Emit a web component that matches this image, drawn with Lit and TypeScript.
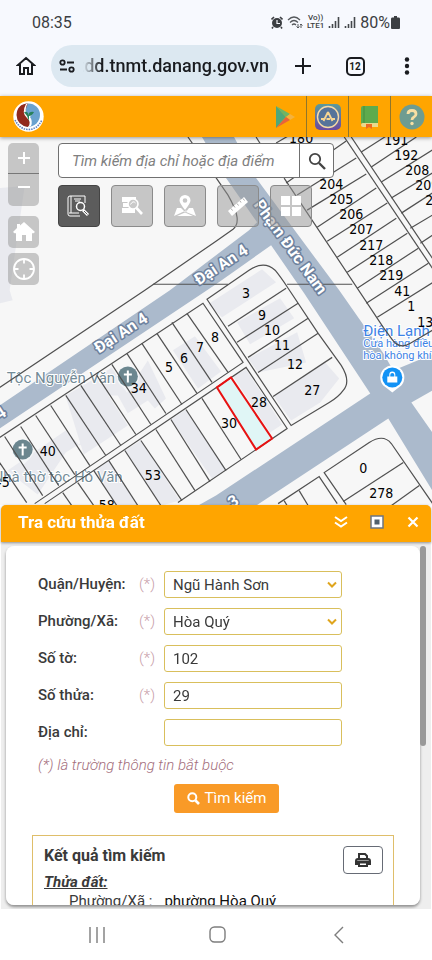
import { LitElement, html, css, svg } from "lit";
import { customElement } from "lit/decorators.js";

type Seg = [number, number, number, number];

// Parcel dividers, as start and end points on the map sheet.
const dividers: Seg[] = [
  [0, 462, 27, 502], [5, 436, 43, 495], [21, 426, 59, 485], [36, 415, 75, 474],
  [51, 405, 90, 465], [66, 395, 106, 455], [81, 385, 121, 445], [97, 375, 136, 434],
  [112, 364, 151, 424], [127, 353, 166, 413], [142, 343, 182, 404], [157, 333, 197, 393],
  [172, 322, 212, 382], [187, 313, 228, 372],
  [63, 492, 72, 505], [78, 482, 94, 505], [94, 470, 117, 505], [109, 460, 138, 505],
  [125, 450, 161, 505], [141, 440, 182, 500], [156, 429, 195, 490], [171, 419, 210, 481],
  [186, 409, 226, 470], [202, 398, 241, 459],
  [228, 326, 286, 288], [237, 342, 298, 303], [248, 357, 308, 318], [258, 372, 318, 333],
  [273, 396, 332, 357],
  [343, 501, 403, 462], [391, 505, 419, 485], [284, 500, 287, 505], [299, 490, 308, 505],
  [286, 183, 346, 141], [297, 195, 356, 158], [307, 210, 366, 174], [317, 227, 376, 188],
  [327, 241, 387, 203], [337, 257, 396, 218], [347, 272, 407, 233], [357, 288, 418, 248],
  [366, 303, 428, 263], [377, 317, 436, 280],
  [361, 152, 386, 136], [371, 167, 416, 137], [381, 182, 432, 150], [391, 198, 432, 173],
  [401, 213, 432, 193], [410, 228, 432, 215], [420, 243, 432, 235],
  [276, 143, 288, 136], [256, 137, 261, 145], [153, 284, 228, 284], [287, 284, 352, 284],
];

const outlines = [
  "M0 387 145 290 216 241 233 229Q238 225 237 217T228 195L188 137",
  "M0 437 203 303 243 362 35 503",
  "M45 503 246 367 287 428 178 502",
  "M207 299 249 270Q264 260 275 270 280 276 288 288L318 333 341 365Q351 381 343 390 338 397 329 402L291 425Z",
  "M346 504 324 472 369 442Q383 433 391 443L433 504",
  "M278 503 319 476 337 503",
  "M284 178 383 327 391 338Q399 350 410 343L432 330",
  "M344 137 432 268",
  "M351 137 432 258",
];

const buildings = [
  "M0 188 25 186 10 290 13 300 0 303Z",
  "M8 470 66 430 80 445 128 413 118 395 66 395 92 380 112 367 127 392 148 360 166 398 155 408 148 400 66 452 38 494 20 480Z",
  "M66 396 97 377 128 425 84 454Z",
  "M173 350 195 336 221 371 198 388Z",
  "M94 470 109 460 138 505H117Z",
  "M125 450 141 440 180 500 161 505Z",
  "M171 419 186 409 226 470 212 478Z",
  "M208 304 262 269 276 282 222 317Z",
  "M237 322 280 298 294 318 250 344Z",
  "M248 358 297 332 306 362 258 372Z",
  "M274 396 325 362 339 378 320 402 291 420Z",
  "M233 376 246 369 282 424 270 432Z",
];

const numbers: [string, number, number][] = [
  ["180", 301, 138], ["191", 396, 140], ["192", 406, 155], ["208", 417, 170], ["209", 427, 185],
  ["210", 437, 200], ["204", 331, 184], ["205", 341, 199], ["206", 351, 214], ["207", 361, 229],
  ["217", 371, 245], ["218", 381, 260], ["219", 391, 275], ["41", 402, 291], ["1", 411, 306],
  ["13", 425, 322], ["3", 246, 293], ["9", 262, 315], ["10", 272, 330], ["11", 282, 345],
  ["12", 295, 364], ["27", 312, 390], ["28", 259, 402], ["30", 229, 423], ["8", 215, 337],
  ["7", 200, 347], ["6", 184, 358], ["5", 169, 367], ["34", 139, 388], ["40", 48, 450],
  ["53", 153, 474], ["45", 2, 481], ["58", 107, 504], ["0", 363, 467], ["278", 381, 492],
];

const roads: [string, number, number, number][] = [
  ["Đại An 4", 124, 337, -33], ["Đại An 4", 224, 269, -33], ["Phạm Đức Nam", 286, 250, 54],
  ["4", 4, 417, -33], ["3", 236, 505, -33],
];

const church = (x: number, y: number) => svg`
  <g transform="translate(${x} ${y})">
    <path d="M0 16Q-4 12-8 8A11 11 0 1 1 8 8Q4 12 0 16Z" fill="#f4f6f8"/>
    <circle r="10" fill="#6b868f"/>
    <path d="M0-6V6M-4-2H4" stroke="#fff" stroke-width="2"/>
  </g>`;

@customElement("parcel-map")
export class ParcelMap extends LitElement {
  static styles = css`
    :host { display: block; position: relative; overflow: hidden; background: #f7f7f7;
      font-family: Roboto, "Noto Sans", sans-serif; }
    .sheet { display: block; width: 100%; height: 100%; }
    .lines { fill: none; stroke: #505050; stroke-width: 1.2; }
    .num { font: 14px "DejaVu Sans Condensed", "Noto Sans", sans-serif; fill: #000; text-anchor: middle; }
    .road { font-size: 16px; font-weight: 700; fill: #fff; stroke: #6d819d; stroke-width: 3px;
      paint-order: stroke; stroke-linejoin: round; text-anchor: middle; }
    .poi { font-size: 15px; fill: #748c98; stroke: #fff; stroke-width: 2px; paint-order: stroke; }
    .shop { fill: #3d83e6; }
    .small { font-size: 11px; }
    .overlay { position: absolute; inset: 6px 8px auto 8px; display: flex; gap: 19px; align-items: flex-start; }
    .side { display: flex; flex-direction: column; width: 31px; }
    button { font: inherit; margin: 0; padding: 0; border: 0; cursor: pointer;
      display: grid; place-items: center; }
    .side button { height: 32px; background: rgba(150, 150, 150, 0.5); border-radius: 5px; }
    .side .in { height: 31px; border-radius: 5px 5px 0 0; border-bottom: 1px solid #777; }
    .side .out { border-radius: 0 0 5px 5px; margin-bottom: 10px; }
    .side .home { margin-bottom: 5px; }
    .main { flex: 1; display: flex; flex-direction: column; gap: 7px; min-width: 0; }
    .search { display: flex; max-width: 276px; height: 35px; box-sizing: border-box; background: #fff;
      border: 1px solid #707070; border-radius: 4px; }
    .search input { flex: 1; min-width: 0; border: 0; background: none; padding: 0 13px; outline: 0;
      font: italic 15px Roboto, "Noto Sans", sans-serif; }
    .search input::placeholder { color: #808080; opacity: 1; }
    .search button { width: 34px; background: none; border-left: 1px solid #707070; }
    .tools { display: flex; gap: 11px; }
    .tools button { width: 42px; height: 42px; border: 1px solid #8b8b8b; border-radius: 4px;
      background: rgba(150, 150, 150, 0.5); }
    .tools .on { background: #5c5c5c; border-color: #444; }
  `;

  render() {
    return html`
      <svg class="sheet" viewBox="0 137 432 367" preserveAspectRatio="xMidYMin slice" role="img" aria-label="Bản đồ thửa đất">
        <g fill="#e9eaef">${buildings.map((d) => svg`<path d=${d}/>`)}</g>
        <g fill="#abbacc">
          <path d="M0 405 170 290 249 230 257 222 226 178 202 137H234L256 178 313 255 339 290 383 353 393 370 432 354V390L411 402 432 432V490L388 418 256 505H198L216 495 370 393 304 293 271 245 216 284 207 290 0 428Z"/>
        </g>
        <path d="M217 387 231 377 272 438 256 449Z" fill="#e0f6f6"/>
        <text class="poi" x="7" y="383">Tộc Nguyễn Văn</text>
        <text class="poi" x="-7" y="481">Nhà thờ tộc Hồ Văn</text>
        <text class="poi shop" x="363" y="336">Điện Lạnh</text>
        <text class="poi shop small" x="363" y="347">Cửa hàng điều</text>
        <text class="poi shop small" x="363" y="359">hòa không khí</text>
        ${church(128, 376)}${church(23, 449)}
        <path d="M392 392Q387 388 383 385A12 12 0 1 1 401 385Q397 388 392 392Z" fill="#fff"/>
        <circle cx="392" cy="377" r="10" fill="#1292f5"/>
        <path d="M387 376H397V382H387ZM389 376V374A3 3 0 0 1 395 374V376Z" fill="#fff"/>
        <path d="M390 376V374.500A2 2 0 0 1 394 374.500V376Z" fill="#1292f5"/>
        <g class="lines">
          ${outlines.map((d) => svg`<path d=${d}/>`)}
          ${dividers.map(([a, b, c, d]) => svg`<line x1=${a} y1=${b} x2=${c} y2=${d}/>`)}
        </g>
        ${roads.map(([t, x, y, r]) => svg`<text class="road" transform="translate(${x} ${y}) rotate(${r})">${t}</text>`)}
        <path d="M217 387 231 377 272 438 256 449Z" fill="none" stroke="#e81212" stroke-width="2"/>
        ${numbers.map(([t, x, y]) => svg`<text class="num" x=${x} y=${y + 5}>${t}</text>`)}
      </svg>
      <div class="overlay">
        <div class="side">
          <button class="in" aria-label="Phóng to"><svg width="14" height="14"><path d="M7 1V13M1 7H13" stroke="#fff" stroke-width="2"/></svg></button>
          <button class="out" aria-label="Thu nhỏ"><svg width="14" height="14"><path d="M1 4H13" stroke="#fff" stroke-width="2"/></svg></button>
          <button class="home" aria-label="Toàn cảnh"><svg width="22" height="22"><path d="M11 1 22 11 20 12.500 19 12V20H13V14H9V20H3V12L2 12.500 0 11 4 7V3H7V4.500Z" fill="#fff"/></svg></button>
          <button aria-label="Vị trí của tôi"><svg width="24" height="24" fill="none" stroke="#fff" stroke-width="1.800"><circle cx="12" cy="12" r="10"/><path d="M12 2V6.500M12 17.500V22M2 12H6.500M17.500 12H22"/></svg></button>
        </div>
        <div class="main">
          <form class="search" @submit=${(e: Event) => e.preventDefault()}>
            <input type="text" aria-label="Tìm kiếm địa chỉ" placeholder="Tìm kiếm địa chỉ hoặc địa điểm" />
            <button aria-label="Tìm"><svg width="18" height="18" fill="none" stroke="#444" stroke-width="1.800"><circle cx="7" cy="7" r="5.200"/><path d="M11 11 17 17" stroke-width="2.400"/></svg></button>
          </form>
          <div class="tools">
            <button class="on" aria-label="Tra cứu thửa đất">
              <svg width="24" height="24" fill="none" stroke="#fff" stroke-width="1"><path d="M18 9V2H3Q1 2 1 4V20Q1 22 3 22H13M4 2V19M2 19H12M7 5H14M8 7H13"/><circle cx="13.500" cy="12.500" r="4" stroke-width="1.500"/><path d="M16 16 21 21" stroke-width="3"/><path d="M17 17 20.500 20.500" stroke="#5c5c5c"/></svg>
            </button>
            <button aria-label="Tra cứu quy hoạch">
              <svg width="24" height="24" fill="#fff"><path d="M2 3H16V8H2ZM3 9H15V13H3ZM2 14H15V19H2Z"/><circle cx="13" cy="10" r="5" fill="#cacaca" stroke="#fff" stroke-width="1.600"/><path d="M10.500 10.500Q13 6 15.500 9" fill="none" stroke="#fff"/><path d="M16.500 14 22 20" stroke="#fff" stroke-width="2.600"/></svg>
            </button>
            <button aria-label="Địa điểm">
              <svg width="24" height="24" fill="#fff"><path fill-rule="evenodd" d="M12 1A5.500 5.500 0 0 1 17.500 6.500Q17.500 9 12 16 6.500 9 6.500 6.500A5.500 5.500 0 0 1 12 1ZM12 4.200A2.300 2.300 0 1 0 12 8.800 2.300 2.300 0 1 0 12 4.200Z"/><path d="M4 14H8L12 18 14 16 1 22ZM16 14H20L23 22 13 18ZM12 18.500 20 22H4Z"/></svg>
            </button>
            <button aria-label="Đo đạc">
              <svg width="24" height="24"><path d="M2 17 18 3 22 8 6 22Z" fill="#fff"/><path d="M5 14.500 6.500 16.500M8 12 9 13.500M11 9.500 12.500 11.500M14 7 15 8.500M17 4.500 18.500 6.500" stroke="#aaa" fill="none"/></svg>
            </button>
            <button aria-label="Lớp bản đồ">
              <svg width="24" height="24" fill="#fff"><path d="M2 2H11V11H2ZM13 2H22V11H13ZM2 13H11V22H2ZM13 13H22V22H13Z"/></svg>
            </button>
          </div>
        </div>
      </div>
    `;
  }
}

@customElement("lookup-panel")
export class LookupPanel extends LitElement {
  static styles = css`
    :host { display: flex; flex-direction: column; margin: 0 1px; min-height: 0; background: #eee;
      border-radius: 5px 5px 0 0; font: 15px/20px Roboto, "Noto Sans", sans-serif; color: #3a3a3a; }
    button { font: inherit; border: 0; margin: 0; padding: 0; background: none; cursor: pointer;
      display: flex; align-items: center; justify-content: center; }
    .bar { flex: none; height: 37px; display: flex; align-items: center; gap: 20px; padding: 0 10px 2px 17px;
      box-sizing: border-box; background: #ffa500; color: #fff; border-radius: 5px 5px 0 0;
      box-shadow: 0 1px 3px rgba(0, 0, 0, 0.4); z-index: 1; }
    h2 { flex: 1; margin: 0; font-size: 17px; font-weight: 700; }
    .bar button { width: 16px; height: 16px; }
    .body { flex: 1; min-height: 0; display: flex; padding: 4px 5px; }
    .scroll { flex: 1; min-width: 0; overflow: hidden auto; scrollbar-width: none; background: #fff;
      border-radius: 8px; box-shadow: 0 2px 3px rgba(0, 0, 0, 0.4); padding: 25px 26px 0 26px; }
    .thumb { flex: none; width: 6px; height: 200px; background: #999; border-radius: 3px; }
    form { display: flex; flex-direction: column; gap: 10px; padding-left: 6px; }
    .row { display: grid; grid-template-columns: 98px 24px minmax(0, 178px); align-items: center; height: 27px; column-gap: 2px; }
    label { font-weight: 500; }
    .req { color: #c9a0aa; font-weight: 300; padding-left: 1px; }
    .field { position: relative; }
    .field input, .field select { display: block; width: 100%; height: 27px; box-sizing: border-box; margin: 0;
      padding: 1px 8px 0; font: 15px Roboto, "Noto Sans", sans-serif; color: #3a3a3a; background: #fff;
      border: 1px solid #d9bf5c; border-radius: 3px; appearance: none; outline: 0; }
    .field svg { position: absolute; right: 5px; top: 9px; pointer-events: none; }
    .note { margin: 0; line-height: 18px; font-style: italic; font-weight: 300; color: #a36e7c; }
    .go { align-self: flex-start; gap: 5px; height: 29px; width: 105px; margin-left: 136px; margin-bottom: 22px;
      background: #f99a27; color: #fff; border-radius: 3px; }
    .result { display: grid; grid-template-columns: 1fr auto; border: 1px solid #dfbe6a; padding: 10px 10px 40px 11px; }
    h3 { margin: 0; font-size: 16px; font-weight: 700; line-height: 20px; }
    h4 { margin: 6px 0 0; font-size: 15px; font-weight: 700; font-style: italic; text-decoration: underline; }
    .print { grid-row: 1 / 3; grid-column: 2; width: 40px; height: 28px; box-sizing: border-box;
      border: 1px solid #666b75; border-radius: 4px; }
    dl { grid-column: 1 / 3; display: flex; gap: 12px; margin: 0; padding-left: 25px; height: 18px; line-height: 18px; }
    dd { margin: 0; color: #111; }
  `;

  private arrow() {
    return html`<svg width="10" height="9" fill="none" stroke="#dfa51d" stroke-width="2"><path d="M1 2.500 5 6.500 9 2.500" /></svg>`;
  }

  private row(id: string, label: string, value: string, kind: "select" | "input", required = true) {
    return html`
      <div class="row">
        <label for=${id}>${label}</label>
        <span class="req">${required ? "(*)" : ""}</span>
        <div class="field">
          ${kind === "select"
            ? html`<select id=${id}><option>${value}</option></select>${this.arrow()}`
            : html`<input id=${id} type="text" .value=${value} />`}
        </div>
      </div>`;
  }

  render() {
    return html`
      <header class="bar">
        <h2>Tra cứu thửa đất</h2>
        <button aria-label="Thu gọn"><svg width="14" height="14" fill="none" stroke="#fff" stroke-width="2"><path d="M1 2 7 6 13 2M1 7.500 7 11.500 13 7.500" /></svg></button>
        <button aria-label="Phóng to"><svg width="14" height="14"><rect x="1" y="1" width="12" height="12" fill="#fff" stroke="#6b7683" stroke-width="1.500" /><rect x="4.500" y="4.500" width="5" height="5" fill="#50606c" /></svg></button>
        <button aria-label="Đóng"><svg width="12" height="12" stroke="#fff" stroke-width="2.200"><path d="M1.500 1.500 10.500 10.500M10.500 1.500 1.500 10.500" /></svg></button>
      </header>
      <div class="body">
        <div class="scroll">
          <form @submit=${(e: Event) => e.preventDefault()}>
            ${this.row("district", "Quận/Huyện:", "Ngũ Hành Sơn", "select")}
            ${this.row("ward", "Phường/Xã:", "Hòa Quý", "select")}
            ${this.row("sheet", "Số tờ:", "102", "input")}
            ${this.row("parcel", "Số thửa:", "29", "input")}
            ${this.row("address", "Địa chỉ:", "", "input", false)}
            <p class="note">(*) là trường thông tin bắt buộc</p>
            <button class="go"><svg width="13" height="13" fill="none" stroke="#fff"><circle cx="5.300" cy="5.300" r="4" stroke-width="2" /><path d="M8.500 8.500 12 12" stroke-width="2.600" /></svg>Tìm kiếm</button>
          </form>
          <section class="result">
            <h3>Kết quả tìm kiếm</h3>
            <button class="print" aria-label="In"><svg width="16" height="16" fill="none" stroke="#333" stroke-width="2"><path d="M4 7V2H10L12 4V7" /><path d="M1 12V9Q1 7 3 7H13Q15 7 15 9V12H12V14H4V12Z" /><path d="M2 10H14" stroke-width="3" /></svg></button>
            <h4>Thửa đất:</h4>
            <dl><dt>Phường/Xã :</dt><dd>phường Hòa Quý</dd></dl>
          </section>
        </div>
        <div class="thumb"></div>
      </div>
    `;
  }
}

@customElement("app-root")
export class AppRoot extends LitElement {
  static styles = css`
    :host { display: flex; flex-direction: column; height: 100vh; background: #fff; color: #3b3e42;
      font-family: Roboto, "Noto Sans", sans-serif; }
    button { font: inherit; color: inherit; border: 0; margin: 0; padding: 0; background: none; cursor: pointer;
      display: grid; place-items: center; }
    .status { display: flex; align-items: center; height: 44px; flex: none; background: #f7f9fe; padding: 0 32px; font-size: 16px; }
    .time { flex: 1; }
    .signals { display: flex; align-items: center; gap: 4px; }
    .volte { font-size: 8px; line-height: 8px; font-weight: 500; text-align: center; }
    .volte span { display: block; }
    .batt { display: flex; align-items: center; gap: 1px; }
    .browser { display: flex; align-items: center; height: 52px; flex: none; box-sizing: border-box; padding: 0 13px 8px 14px;
      background: #f7f9fe; color: #1a1c20; }
    .acts button, .start { width: 24px; height: 24px; }
    .url { flex: 1; min-width: 0; height: 42px; display: flex; align-items: center; gap: 8px; margin: 0 14px 0 13px; padding: 0 8px;
      border-radius: 21px; background: #dce8f1; }
    .host { flex: 1; min-width: 0; display: flex; justify-content: flex-end; overflow: hidden; white-space: nowrap; font-size: 18px; line-height: 28px; font-weight: 500;
      mask-image: linear-gradient(90deg, transparent, #000 18px); }
    .acts { display: flex; gap: 28px; align-items: center; }
    .tabs { font-size: 10px; font-weight: 700; }
    .tabs span { display: grid; place-items: center; width: 15px; height: 15px; border: 2px solid #1a1c20; border-radius: 5px; }
    .site { display: flex; align-items: stretch; height: 41px; flex: none; background: #ffa500; box-shadow: 0 1px 4px rgba(0, 0, 0, 0.4); z-index: 1; }
    .logo { flex: 1; display: flex; align-items: center; padding-left: 13px; }
    .site button { width: 42px; box-sizing: border-box; border-left: 1px solid #8f762c; }
    .site .first { border: 0; }
    parcel-map { flex: 10 1 0; min-height: 0; }
    lookup-panel { flex: 11 1 0; }
    .nav { display: flex; justify-content: space-between; align-items: center; height: 51px; flex: none; padding: 0 80px 0 84px; background: #fff; }
    .nav button { width: 26px; height: 26px; }
  `;

  private bars() {
    return html`<svg width="12" height="12" stroke="#44474b" stroke-width="1.600"><path d="M1.500 12V10M4.500 12V8M7.500 12V5M10.500 12V1" /></svg>`;
  }

  render() {
    return html`
      <div class="status">
        <span class="time">08:35</span>
        <div class="signals">
          <svg width="12" height="13"><circle cx="6" cy="7" r="5" fill="#3b3e42" /><path d="M0.500 3.500 3 1M11.500 3.500 9 1M2 11 1 12.500M10 11 11 12.500" stroke="#3b3e42" stroke-width="1.600" /><path d="M6 4V7.500H9" stroke="#f7f9fe" fill="none" stroke-width="1.200" /></svg>
          <svg width="16" height="14" fill="none" stroke="#55585c" stroke-width="1.200"><path d="M1 5Q7-1 13 5M3 7.500Q7 3.500 11 7.500M5 10Q7 8 9 10" /><path d="M11 13V9M9.500 11.500 11 13 12.500 11.500M14 13V9M13 10 14 9 15.500 10.500" stroke-width="1" /></svg>
          <span class="volte"><span>Vo))</span><span>LTE1</span></span>
          ${this.bars()}${this.bars()}
          <span class="batt">80%<svg width="9" height="13"><path d="M3 0H6V1.500H8Q9 1.500 9 3V12Q9 13 8 13H1Q0 13 0 12V3Q0 1.500 1 1.500H3Z" fill="#3b3e42" /></svg></span>
        </div>
      </div>
      <div class="browser">
        <button class="start" aria-label="Trang chủ"><svg width="20" height="20" fill="none" stroke="#1a1c20" stroke-width="2"><path d="M10 2 18 9H16V18H12V12H8V18H4V9H2Z" /></svg></button>
        <button class="url" aria-label="Địa chỉ trang">
          <svg width="16" height="14" fill="none" stroke="#1a1c20" stroke-width="1.800"><circle cx="3.500" cy="3.500" r="2.200" /><path d="M8 3.500H15M1 10.500H8" /><circle cx="12.500" cy="10.500" r="2.200" /></svg>
          <span class="host">tdd.tnmt.danang.gov.vn</span>
        </button>
        <div class="acts">
          <button aria-label="Thẻ mới"><svg width="18" height="18" stroke="#1a1c20" stroke-width="2"><path d="M9 1V17M1 9H17" /></svg></button>
          <button class="tabs" aria-label="12 thẻ"><span>12</span></button>
          <button aria-label="Trình đơn"><svg width="6" height="18" fill="#1a1c20"><circle cx="3" cy="2.500" r="2.200" /><circle cx="3" cy="9" r="2.200" /><circle cx="3" cy="15.500" r="2.200" /></svg></button>
        </div>
      </div>
      <header class="site">
        <div class="logo">
          <svg width="31" height="31" viewBox="0 0 31 31"><circle cx="15.500" cy="15.500" r="15.200" fill="#fff" /><circle cx="15.500" cy="14" r="11.500" fill="#6aa2cf" /><path d="M15 2.500Q4 3 3.500 14 4 24 15 26 19 22 15 17 10 12 15 2.500Z" fill="#92291d" /><path d="M13 3Q8 12 14 17 19 21 15 26L18 25Q20 20 17 16L20 12 16 14 13 11Q12 6 15 2.500Z" fill="#fff" /><path d="M11 11Q15 10 15.500 14 16 10 21 11 19 15 16 15V20Q15 15 11 11Z" fill="#28805c" /><path d="M2 19Q7 28.500 15.500 28.500T29 19" fill="none" stroke="#5d7fbd" stroke-width="1.600" stroke-dasharray="1.500 1" /></svg>
        </div>
        <button class="first" aria-label="Google Play"><svg width="20" height="22"><path d="M1 0 11 11 1 22Z" fill="#4fa77a" /><path d="M1 0 15 8 11 11Z" fill="#6db567" /><path d="M15 8 20 11 15 14 11 11Z" fill="#f4b23e" /><path d="M11 11 15 14 1 22Z" fill="#e8633a" /></svg></button>
        <button aria-label="App Store"><svg width="26" height="26"><defs><linearGradient id="g" x2="0" y2="1"><stop stop-color="#5b9a9a" /><stop offset="1" stop-color="#6b4aa0" /></linearGradient></defs><rect width="26" height="26" rx="5" fill="url(#g)" /><circle cx="13" cy="13" r="10.500" fill="#56739a" stroke="#f5d9a6" stroke-width="1.400" /><path d="M13 8 8.500 17M13 8 17.500 17M6 15H10M11.500 15H15M17 15H20" stroke="#f8d592" stroke-width="1.800" fill="none" /></svg></button>
        <button aria-label="Hướng dẫn"><svg width="20" height="24"><path d="M3 1H18V18H3Q1 18 1 20V3Q1 1 3 1Z" fill="#5eab4d" /><path d="M4 1V18" stroke="#428f42" /><path d="M3 18H18V22H3Q1 22 1 20T3 18Z" fill="#ead98c" /><path d="M6 19H12V24L9 22 6 24Z" fill="#ed6b22" /></svg></button>
        <button aria-label="Trợ giúp"><svg width="26" height="26" fill="none"><circle cx="13" cy="13" r="12.500" fill="#6e9c91" /><path d="M9 10Q9 6.500 13 6.500T17 10Q17 12 15 13T13 16" stroke="#f7dfa3" stroke-width="2.800" /><circle cx="13" cy="19.500" r="1.700" fill="#f7dfa3" /></svg></button>
      </header>
      <parcel-map></parcel-map>
      <lookup-panel></lookup-panel>
      <nav class="nav">
        <button aria-label="Gần đây"><svg width="18" height="16" stroke="#7d7d7d" stroke-width="1.400"><path d="M2 0V16M9 0V16M16 0V16" /></svg></button>
        <button aria-label="Màn hình chính"><svg width="18" height="18" fill="none" stroke="#7d7d7d" stroke-width="1.400"><rect x="1" y="1" width="15" height="15" rx="4.500" /></svg></button>
        <button aria-label="Quay lại"><svg width="12" height="18" fill="none" stroke="#7d7d7d" stroke-width="1.400"><path d="M10 1 2 9 10 17" /></svg></button>
      </nav>
    `;
  }
}
